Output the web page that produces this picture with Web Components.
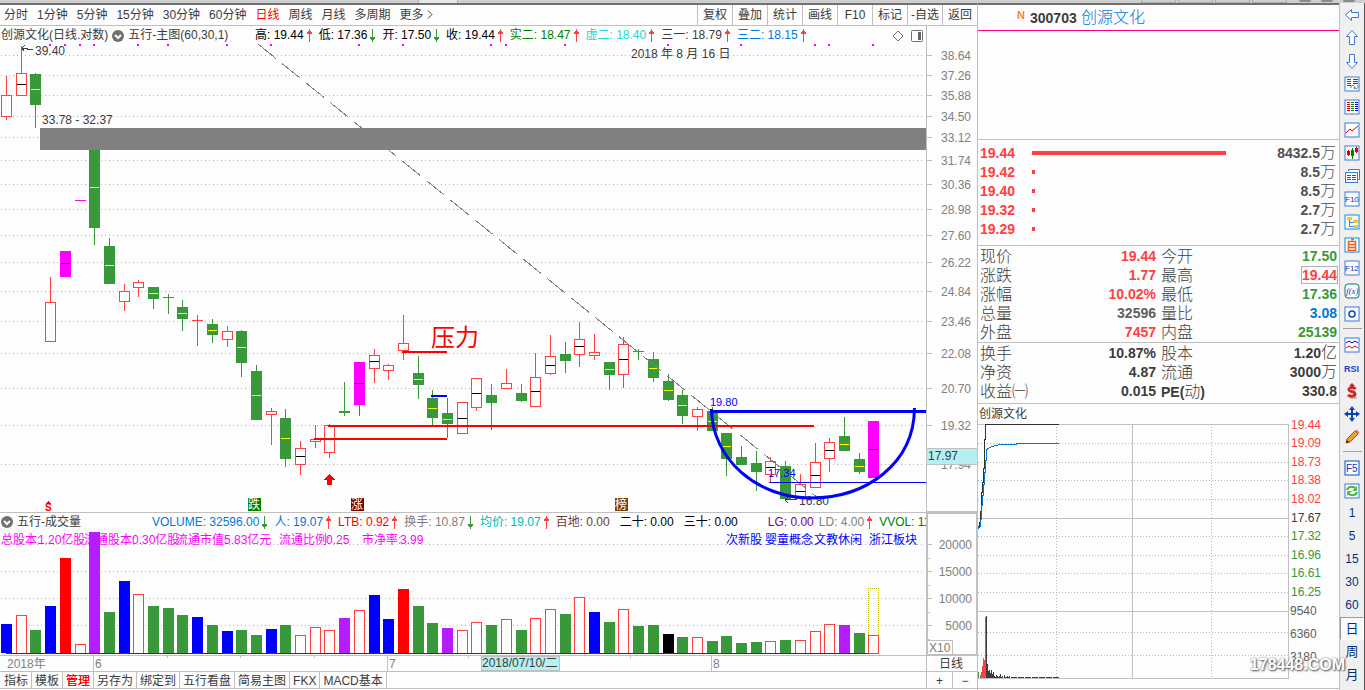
<!DOCTYPE html>
<html lang="zh-CN">
<head>
<meta charset="utf-8">
<title>创源文化 300703</title>
<style>
html,body{margin:0;padding:0}
body{background:#fdfdfd;color:#3c3c3c;font-family:"Liberation Sans","Noto Sans CJK SC",sans-serif;font-size:12px;line-height:16px;overflow:hidden}
</style>
</head>
<body>
<trade-app></trade-app>
<script>
const LINE = '#c0c0c0', RED = '#ff4040', GREEN = '#399839', MAG = '#ff00ff';
const BTN = 'button{all:unset;box-sizing:border-box;cursor:pointer}';
const SVGCSS = ':host{display:block}svg{display:block;width:100%;height:auto;overflow:visible}text{font-family:"Liberation Sans","Noto Sans CJK SC",sans-serif;font-size:12px;white-space:pre}';
const rect = (x, y, w, h, f, extra = '') => `<rect x="${x}" y="${y}" width="${w}" height="${h}" fill="${f}" ${extra}/>`;
const box = (x, y, w, h, s, f = '#fdfdfd') => `<rect x="${x + .5}" y="${y + .5}" width="${w - 1}" height="${h - 1}" fill="${f}" stroke="${s}"/>`;
const hl = (x1, x2, y, c, extra = '') => `<path d="M${x1} ${y + .5}H${x2}" stroke="${c}" fill="none" ${extra}/>`;
const vl = (x, y1, y2, c, extra = '') => `<path d="M${x + .5} ${y1}V${y2}" stroke="${c}" fill="none" ${extra}/>`;
const txt = (x, y, s, c = '#3c3c3c', extra = '') => `<text x="${x}" y="${y}" fill="${c}" ${extra}>${s}</text>`;
const slot = i => Math.round(6 + 14.7 * i);
const define = (name, render) => customElements.define(name, class extends HTMLElement {
  connectedCallback() {
    if (this.shadowRoot) return;
    this.attachShadow({mode: 'open'}).innerHTML = render(this);
  }
});

/* colour, high, body top, body bottom, low, middle mark */
const CANDLES = [
['r',76,95,116,119],['r',46,73,95,95,84],['g',73,74,104,127,89],['r',277,302,341,341],['m',251,251,276,276,263],['m',200,200,200,200],
['g',150,150,227,244,187],['g',238,246,283,283,265],['r',284,291,301,310],['r',280,282,287,296],['g',287,287,298,308,293],['g',294,297,297,313],
['g',300,307,318,330,313],['r',315,320,320,345],['g',319,324,334,342,330],['r',326,331,339,346],['g',330,331,362,376,347],['g',365,371,419,419,395],
['r',408,411,414,444],['g',409,418,458,466,438],['r',441,448,464,474,456],['r',425,439,441,447],['r',424,425,452,457],['g',382,411,412,415],
['m',362,362,404,415,383],['r',349,355,368,382,361],['r',364,365,370,379],['r',315,343,350,359],['g',356,373,384,398,379],['g',390,398,417,424,408],
['g',398,413,423,437,419],['r',402,402,433,433,418],['r',378,378,407,410,393],['g',384,395,402,429],['r',369,383,388,388],['g',384,393,400,401],
['r',353,377,406,406,391],['r',335,356,373,374,365],['g',342,354,360,372],['r',322,339,354,366,346],['r',334,352,355,359],['g',362,362,374,389,369],
['r',337,344,374,387,359],['g',349,351,351,359],['g',352,359,377,381,368],['g',374,381,399,400,390],['g',390,395,415,423,405],['r',407,409,416,430],
['g',407,411,430,430,421],['g',433,433,458,475,446],['g',446,457,464,464],['g',451,463,471,490],['r',457,461,474,482,467],['g',461,466,498,498],
['r',474,484,498,498,491],['r',443,462,487,487,475],['r',438,442,458,471,450],['g',417,436,450,450,444],['g',453,459,471,473,466],['m',421,421,477,477,449]];
/* fill, bar top */
const VOLUMES = 'b624 h615 g630 b606 r558 h644 p532 g612 b581 h594 g606 g608 g615 b617 g625 b631 g630 g635 b629 g625 h635 h627 h630 p618 h610 b595 b619 r589 g606 g623 p628 h630 h622 g625 h619 g630 h618 h609 g614 h597 b612 g622 h609 g626 g625 k634 g637 h637 g641 g636 g643 g642 h641 g640 h640 h631 h624 p625 g633 h635'.split(' ');

define('window-strip', () => `<style>
:host{display:flex;height:3px;background:#cfcfcf;overflow:hidden}
.gap{width:418px}.hi{width:38px;background:#e6e6e6;border:solid #aaa;border-width:0 1px}.mid{flex:1}
.t{width:33px;margin-right:2px;border:1px solid #aaa;border-top:0;height:2px;box-sizing:content-box}.o{width:12px;height:2px;background:#8a8a8a;margin-left:10px;border-radius:0 0 6px 6px}.end{width:10px}
</style><span class="gap"></span><span class="hi"></span><span class="mid"></span><span class="t"></span><span class="t"></span><span class="t"></span><span class="t"></span><span class="o"></span><span class="o"></span><span class="o"></span><span class="end"></span>`);

define('period-toolbar', () => `<style>${BTN}
:host{display:flex;height:20px;border-bottom:1px solid ${LINE};line-height:20px}
nav{display:flex;gap:9px;padding-left:4px;flex:1}
.on{color:#f00}
.acts{display:flex}.acts button{width:35px;border-left:1px solid ${LINE};text-align:center}
</style><nav>${'分时,1分钟,5分钟,15分钟,30分钟,60分钟,日线,周线,月线,多周期'.split(',').map(t => `<button${t === '日线' ? ' class="on"' : ''}>${t}</button>`).join('')}<button>更多 <svg width="6" height="9"><path d="M1 0.5L5 4.5L1 8.5" fill="none" stroke="#3c3c3c"/></svg></button></nav>
<div class="acts">${'复权,叠加,统计,画线,F10,标记,-自选,返回'.split(',').map(t => `<button>${t}</button>`).join('')}</div>`);

define('legend-item', el => {
  const d = el.getAttribute('dir-mark');
  const a = d === 'up' ? `<svg width="5" height="13" shape-rendering="crispEdges" fill="${RED}"><path d="M2 0h1v13h-1zM1 2h3v1h-3zM0 3h5v2h-5z"/></svg>`
    : d === 'down' ? `<svg width="5" height="13" shape-rendering="crispEdges" fill="${GREEN}"><path d="M2 0h1v13h-1zM1 10h3v1h-3zM0 8h5v2h-5z"/></svg>` : '';
  return `<style>:host{display:flex;align-items:center;white-space:pre;margin-right:${d ? 7 : 10}px}svg{margin-left:3px}</style><slot></slot>${a}`;
});

const CHEV = '<svg class="chev" width="12" height="12"><circle cx="6" cy="6" r="6" fill="#707070"/><path d="M3 5L6 8L9 5" fill="none" stroke="#fff" stroke-width="2"/></svg>';
const items = a => a.map(([t, c, d]) => `<legend-item style="color:${c}" ${d ? `dir-mark="${d}"` : ''}>${t}</legend-item>`).join('');

define('price-legend', () => `<style>
:host{display:flex;height:18px;line-height:17px;white-space:nowrap}
.l{flex:1;display:flex;align-items:center;min-width:0;overflow:hidden;padding:1px 0 0 1px}
.name{display:flex;align-items:center;gap:4px;width:254px}.r{width:50px;border-left:1px solid ${LINE}}
.tools{margin-left:auto;display:flex;gap:7px;padding-right:3px}
</style><div class="l"><span class="name">创源文化(日线.对数)${CHEV}五行-主图(60,30,1)</span>${items([
['高: 19.44','#000','up'],['低: 17.36','#000','down'],['开: 17.50','#000','down'],['收: 19.44','#000','up'],['实二: 18.47','#008000','up'],['虚二: 18.40','#20d8d8','up'],['三一: 18.79','#3c3c3c','up'],['三二: 18.15','#0078d7','up']])}
<span class="tools"><svg width="12" height="12"><path d="M6 1L11 6L6 11L1 6z" fill="none" stroke="#707070"/></svg><svg width="12" height="12"><rect x=".5" y=".5" width="11" height="11" rx="1" fill="none" stroke="#707070"/><rect x="7" y="2" width="3" height="8" fill="#666"/></svg></span></div><div class="r"></div>`);

define('volume-legend', () => `<style>
:host{display:flex;height:17px;line-height:16px;white-space:nowrap;border-top:1px solid ${LINE}}
.l{flex:1;display:flex;align-items:center;min-width:0;overflow:hidden;padding:1px 0 0 1px}
.name{display:flex;align-items:center;gap:4px;width:151px;flex:none}.sp{width:20px;flex:none}.r{flex:none;box-sizing:border-box;border:2px solid ${LINE};border-width:1px 1px 0 2px;width:51px}
legend-item{flex:none}
</style><div class="l"><span class="name">${CHEV}五行-成交量</span>${items([
['VOLUME: 32596.00','#0078d7','down'],['人: 19.07','#0078d7','up'],['LTB: 0.92','#f00','up'],['换手: 10.87','#808080','down'],['均价: 19.07','#00b8b8','up'],['百地: 0.00','#6b3a3a'],['二十: 0.00','#000'],['三十: 0.00','#000']])}<span class="sp"></span>${items([['LG: 0.00','#800080;margin-right:5px'],['LD: 4.00','#808080','up'],['VVOL: 11','#008000']])}</div><div class="r"></div>`);

define('price-chart', () => {
  const ys = [55,75,95,116,137,160,184,209,235,262,291,321,353,388,425,464];
  const lab = '38.64 37.26 35.88 34.50 33.12 31.74 30.36 28.98 27.60 26.22 24.84 23.46 22.08 20.70 19.32 17.94'.split(' ');
  let s = ys.map((y, i) => hl(1, 925, y, '#b8b8b8', 'stroke-dasharray="1 3"') + hl(927, 932, y, LINE) + txt(941, y + 5, lab[i], '#808080')).join('');
  s += vl(926, 44, 512, LINE) + hl(926, 977, 511, LINE);
  CANDLES.forEach(([c, h, t, b, l, m], i) => {
    const x = slot(i), col = c === 'r' ? RED : c === 'g' ? GREEN : MAG;
    if (l > h) s += vl(x, h, l + 1, col);
    if (c === 'r' && b > t) s += box(x - 5, t, 11, b - t + 1, col);
    else s += rect(x - 5, t, 11, b - t + 1, col);
    if (m) s += rect(x - 4, m, 9, 1, c === 'g' ? '#ff0' : '#000');
  });
  [3,4,5,6,9,11,15,18,24,27,33,34,38,45,50,55,56,59].forEach(i => s += rect(slot(i) - 1, 44, 2, 2, MAG));
  s += '<path d="M258 44L818 498" stroke="#808080" stroke-dasharray="23 8" fill="none"/>';
  s += rect(40, 128, 886, 22, '#808080');
  s += rect(328, 425, 486, 2, '#f00') + rect(314, 438, 133, 2, '#f00') + rect(402, 351, 45, 2, '#f00') + rect(431, 395, 16, 2, '#00f');
  s += rect(710, 410, 216, 3, '#00f') + rect(769, 482, 157, 1, '#00f');
  s += txt(35, 55, '39.40') + txt(42, 124, '33.78 - 32.37') + txt(631, 58, '2018 年 8 月 16 日');
  s += '<path d="M22 48L33 50M22 48L25 45M22 48L24 51" stroke="#3c3c3c" fill="none"/>';
  s += txt(710, 406, '19.80', '#00f', 'style="font-size:11px"') + txt(768, 477, '17.34', '#00f', 'style="font-size:11px"');
  s += txt(799, 505, '16.80') + '<path d="M785 499.500H797M785 499.500L788 497M785 499.500L788 503" stroke="#3c3c3c" fill="none"/>';
  s += '<path shape-rendering="auto" d="M711.500 409C712 460 758 498 811 498C866 498 914 464 914.500 408" stroke="#00f" stroke-width="3" fill="none"/>';
  s += txt(431, 346, '压力', '#f00', 'style="font-size:24px"');
  s += '<path d="M329.500 474L335 480H332V485H327V480H324z" fill="#f00"/>';
  [[248,'跌','#008000'],[351,'涨','#800000'],[615,'榜','#804000']].forEach(([x, t, c]) => s += rect(x, 498, 13, 13, c) + txt(x, 509, t, '#fff'));
  s += txt(45, 511, 'S', '#f00', 'style="font-size:10px;font-weight:700"') + '<path d="M46 504L48.500 501L51 504z" fill="#f00"/>';
  s += rect(927, 449, 50, 15, '#b4f0f0') + hl(927, 977, 448, LINE) + hl(927, 977, 464, LINE) + txt(928, 460, '17.97');
  return `<style>${SVGCSS}</style><svg viewBox="0 44 977 468" shape-rendering="crispEdges">${s}</svg>`;
});

define('volume-chart', () => {
  let s = [544,571,598,625].map((y, i) => hl(1, 925, y, '#b8b8b8', 'stroke-dasharray="1 3"') + hl(928, 932, y, LINE) + hl(928, 930, y + 14, LINE) + txt(972, y + 5, ['20000','15000','10000','5000'][i], '#808080', 'text-anchor="end"')).join('');
  [[1,'总股本:'],[38,'1.20亿股'],[84,'流通股本:'],[132,'0.30亿股'],[176,'流通市值:'],[224,'5.83亿元'],[279,'流通比例:'],[326,'0.25'],[362,'市净率:'],[400,'3.99']].forEach(([x, t]) => s += txt(x, 544, t, MAG));
  [[726,'次新股'],[765,'婴童概念'],[814,'文教休闲'],[869,'浙江板块']].forEach(([x, t]) => s += txt(x, 544, t, '#00f'));
  const fill = {b: '#00f', g: GREEN, r: '#f00', p: '#b41eff', k: '#000'};
  VOLUMES.forEach((v, i) => {
    const y = +v.slice(1), x = slot(i) - 5;
    s += v[0] === 'h' ? box(x, y, 11, 654 - y + (i === 59 ? 0 : 2), RED) : rect(x, y, 11, 653 - y, fill[v[0]]);
  });
  s += hl(6, 868, 653, '#800080') + rect(0, 654, 926, 1, '#fdfdfd');
  s += '<path d="M868.500 635V588.500H878.500V635" fill="none" stroke="#c0b800" stroke-dasharray="1 1"/>';
  s += rect(926, 530, 2, 126, LINE) + rect(976, 530, 1, 126, LINE) + rect(926, 654, 51, 2, LINE);
  s += box(927, 640, 26, 15, LINE) + txt(929, 652, 'X10', '#808080');
  s += hl(0, 977, 655, LINE) + hl(0, 977, 671, LINE) + vl(926, 655, 672, LINE);
  [93,387,711].forEach((x, i) => s += vl(x, 655, 671, LINE) + txt(x + 2, 668, 6 + i, '#808080'));
  [167,240,314,468,630].forEach(x => s += vl(x, 656, 658, LINE));
  s += txt(7, 668, '2018年', '#808080') + box(481, 656, 79, 15, LINE, '#b4f0f0') + txt(482, 667, '2018/07/10/二') + txt(939, 668, '日线');
  return `<style>${SVGCSS}</style><svg viewBox="0 530 977 142" shape-rendering="crispEdges">${s}</svg>`;
});

define('template-tabs', () => `<style>${BTN}
:host{display:flex;height:16px;line-height:18px;border-bottom:1px solid ${LINE}}
nav{display:flex;flex:1;padding-left:1px}nav button{height:16px;padding:0 3px;border-right:1px solid ${LINE}}.on{color:#f00;text-shadow:0 0 0 #f00}
.z{display:flex}.z button{width:25px;height:16px;border-left:1px solid ${LINE};text-align:center}.z button:first-child{width:26px}
</style><nav>${'指标,模板,管理,另存为,绑定到,五行看盘,简易主图,FKX,MACD基本'.split(',').map(t => `<button${t === '管理' ? ' class="on"' : ''}>${t}</button>`).join('')}</nav><div class="z"><button>+</button><button>−</button></div>`);

define('order-book', () => `<style>
:host{display:block;padding:3px 3px 7px 2px;border-bottom:1px solid ${LINE}}
div{display:grid;grid-template-columns:52px 194px 1fr;align-items:center;height:19px;font-size:14px;font-weight:700;color:${RED}}
i{display:block;height:4px;background:${RED}}b{color:#505050;text-align:right}span{font-size:16px;font-weight:300}
</style>${[['19.44','8432.5',194],['19.42','8.5',3],['19.40','8.5',3],['19.32','2.7',3],['19.29','2.7',3]].map(([p, v, w]) => `<div>${p}<i style="width:${w}px"></i><b>${v}<span>万</span></b></div>`).join('')}`);

define('quote-table', () => {
  const r = RED, g = GREEN, k = '#3c3c3c';
  const part = rows => `<table>${rows.map(a => `<tr><th>${a[0]}</th><td style="color:${a[2]}">${a[1]}</td><th>${a[3]}</th><td style="color:${a[5]}"${a[6] ? ' class="hi"' : ''}><span>${a[4]}</span></td></tr>`).join('')}</table>`;
  return `<style>
:host{display:block}table{width:100%;border-collapse:collapse;table-layout:fixed}
section{border-bottom:1px solid ${LINE};padding-top:1px}section+section{padding-bottom:2px}
tr{height:19px}th,td{padding:0;line-height:19px;height:19px}
th{width:57px;text-align:left;font-size:16px;font-weight:300;padding-left:2px;white-space:nowrap}th+td+th{padding-left:5px}
td{font-size:14px;font-weight:700;text-align:right;padding-right:2px}td em{font-style:normal;font-weight:300;font-size:16px;line-height:0}td:nth-child(2){width:119px;padding:0}
th b{font-size:14px;font-weight:700;line-height:0}.hi span{outline:1px solid #b0b0b0}
</style><section>${part([['现价','19.44',r,'今开','17.50',g],['涨跌','1.77',r,'最高','19.44',r,1],['涨幅','10.02%',r,'最低','17.36',g],['总量','32596','#606060','量比','3.08','#0078d7'],['外盘','7457',r,'内盘','25139',g]])}</section>
<section>${part([['换手','10.87%',k,'股本','1.20<em>亿</em>',k],['净资','4.87',k,'流通','3000<em>万</em>',k],['收益㈠','0.015',k,'<b>PE(</b>动<b>)</b>','330.8',k]])}</section>`;
});

define('minute-chart', () => {
  const D = 'stroke-dasharray="1 2"';
  let s = [443,462,480,499,536,555,573,592,632,655].map(y => hl(978, 1288, y, '#b8b8b8', D)).join('');
  s += [424,518,611,678].map(y => hl(978, 1289, y, LINE)).join('') + vl(1132, 424, 679, LINE) + vl(1288, 424, 679, LINE) + vl(1056, 424, 679, '#b8b8b8', D) + vl(1211, 424, 679, '#b8b8b8', D);
  [[429,'19.44',RED],[447,'19.09',RED],[466,'18.73',RED],[484,'18.38',RED],[503,'18.02',RED],[522,'17.67','#3c3c3c'],[540,'17.32',GREEN],[559,'16.96',GREEN],[577,'16.61',GREEN],[596,'16.25',GREEN],[615,'9540','#606060'],[638,'6360','#606060'],[661,'3180','#606060']].forEach(([y, t, c], i) => s += txt(i < 10 ? 1291 : 1290, y, t, c));
  s += '<path d="M978 526.500H979.500V522.500H980.500V511H981.500V492H982.500V482H983.500V468H984.500V439.500H985.500V424.500H1059" fill="none" stroke="#303030"/>';
  s += '<path d="M978 528.500L980.500 526.500V519.500H981.500V505H982.500V495H983.500V484H984.500V472H985.500V460H986.500V450L988 448.500L992.500 446.500L1000 444.500H1016.500V443.500H1059" fill="none" stroke="#0078d7"/>';
  [[978,672,GREEN],[980,675,RED],[981,672,RED],[982,666,RED],[983,658,RED],[984,660,RED],[985,617,RED],[986,616,'#3c3c3c'],[987,664],[988,671],[989,670],[990,673],[991,670],[992,674],[993,672],[994,676],[996,675],[997,676],[999,676],[1000,674],[1002,676],[1004,675],[1007,676],[1009,676]].forEach(([x, y, c]) => s += rect(x, y, 1, 678 - y, c || '#3c3c3c'));
  s += hl(990, 1060, 677, '#3c3c3c', 'stroke-dasharray="6 1"');
  return `<style>${SVGCSS}h2{margin:0;font-size:12px;font-weight:400;line-height:20px;padding-left:1px}:host{border-bottom:1px solid ${LINE}}</style><h2>创源文化</h2><svg viewBox="978 424 361 264" shape-rendering="crispEdges">${s}</svg>`;
});

define('quote-panel', () => `<style>
:host{display:block}
header{display:flex;height:25px;align-items:center;padding-left:39px;border-bottom:1px solid #ff0080}
sup{font:700 11px/12px "Liberation Sans",sans-serif;color:#ff8040;width:13px;align-self:flex-start;padding-top:4px}
b{font-size:14px;width:51px}h1{margin:0;font-size:16px;font-weight:300;color:#0078d7;line-height:24px}
.blank{height:108px;border-bottom:1px solid ${LINE}}
</style><header><sup>N</sup><b>300703</b><h1>创源文化</h1></header><div class="blank"></div><order-book></order-book><quote-table></quote-table><minute-chart></minute-chart>`);

define('tool-rail', () => {
  const B = (c, inner) => `<rect x="1" y="1" width="14" height="14" fill="#fdfdfd" stroke="${c}"/>${inner}`;
  const T = (t, x, n) => `<text x="${x}" y="${n > 8 ? 12 : 11}" fill="#2030c0" style="font:${n}px 'Liberation Sans',sans-serif">${t}</text>`;
  const rows = (x, w, c, ys) => ys.map(y => `<path d="M${x} ${y}.5h${w}" stroke="${c}"/>`).join('');
  const A = '#3c78d8';
  const ic = [
    ['后退', `<path d="M1.500 8L7.500 2.500V5.500H14.500V10.500H7.500V13.500z" fill="#fff" stroke="${A}"/>`],
    ['上移', `<path d="M8 .5L13.500 6.500H10.500V14.500H5.500V6.500H2.500z" fill="#fff" stroke="${A}"/>`],
    ['下移', `<path d="M8 15.500L13.500 9.500H10.500V1.500H5.500V9.500H2.500z" fill="#fff" stroke="${A}"/>`],
    ['报价', B(A, rows(3, 4, '#008000', [3,5,7,9]) + rows(9, 5, '#e00000', [3,5,7]) + '<path d="M7 12a2 2 0 1 1 3 1M10 11a2 2 0 1 0 3-2" fill="none" stroke="#777"/>')],
    ['列表', B(A, rows(3, 3, '#e00000', [3,5,7,9,11]) + rows(7, 3, '#008000', [3,5,7,9,11]) + rows(11, 3, '#0000d0', [3,5,7,9,11]))],
    ['走势', B(A, '<path d="M2 11L6 7L8 9L14 4" fill="none" stroke="#e00000"/>')],
    ['K线', B(A, '<path d="M4.500 5V11M12.500 2V8" stroke="#e00000"/><path d="M8.500 3V14" stroke="#008000"/><path d="M3 6h3v4H3zM11 3h3v4h-3z" fill="#e00000"/><path d="M7 5h3v6H7z" fill="#008000"/>')],
    ['资讯', `<path d="M4.500 3V1.500H15.500V11.500H13" fill="#fff" stroke="${A}"/><rect x="1.500" y="4.500" width="12" height="10" fill="#fff" stroke="${A}"/>` + rows(3, 4, '#555', [7,9,11]) + rows(8, 4, '#555', [7,9,11])],
    ['F10', B(A, T('F10', 1, 8))],
    ['结构', B('#0090e0', '<path d="M5.500 5V12.500H9M5.500 8.500H9" fill="none" stroke="#3c78d8"/><path d="M3 3h5v3H3zM9 6h5v3H9zM9 11h5v3H9z" fill="#ffc020"/>')],
    ['自选', B('#0090e0', '<path d="M5 4.500H11.500V13.500H4.500V4.500H6M5 7.500H11M5 10.500H11M7 2.500H10" fill="none" stroke="#f06020" stroke-width="1.500"/>')],
    ['F12', B(A, T('F12', 1, 8))],
    ['公式', `<rect x="1" y="1" width="14" height="14" rx="3" fill="#fff" stroke="#107878"/><text x="2" y="11" fill="#2030c0" style="font:italic 9px 'Liberation Serif',serif">f(x)</text>`],
    ['圆', B(A, '<circle cx="8" cy="8" r="3" fill="none" stroke="#0050b0" stroke-width="1.500"/>')], 0,
    ['对比', B(A, '<path d="M2 6L5 4L8 6L11 4L14 6" fill="none" stroke="#0000d0"/><path d="M2 11L5 9L8 11L11 9L14 11" fill="none" stroke="#e00000"/>')],
    ['RSI', `<text x="0" y="12" fill="#2838d8" style="font:700 9px 'Liberation Sans',sans-serif">RSI</text>`],
    ['交易', `<path d="M8 0L11 3H9.500V4H6.500V3H5z" fill="#d02020"/><path d="M11.500 6C9 3.500 4.500 4.500 5 7C5.500 9 11 8 11 11C11 13.500 6 14 4 12" fill="none" stroke="#c82828" stroke-width="3"/><path d="M6 15H13" stroke="#888"/>`],
    ['移动', '<path d="M8 0L11 4H5zM8 16L11 12H5zM0 8L4 5V11zM16 8L12 5V11z" fill="#0840b8"/><path d="M8 4V12M4 8H12" stroke="#0840b8" stroke-width="2"/>'],
    ['画笔', '<path d="M2 14L3 10L11 2L14 5L6 13z" fill="#f0a030" stroke="#8a5020"/><path d="M11 2L12.500.5L15.500 3.500L14 5z" fill="#e87070"/><path d="M2 14L3 11L5 13z" fill="#333"/>'], 0,
    ['F5', B('#0050d0', T('F5', 2, 10))],
    ['刷新', B(A, '<path d="M3 7C4 3 10 3 12 6M13 9C12 13 6 13 4 10" fill="none" stroke="#40b040" stroke-width="2"/><path d="M13 3V8H8zM3 13V8H8z" fill="#50c040"/>')]];
  return `<style>${BTN}
:host{display:flex;flex-direction:column;background:#f0f0f0;border-left:1px solid ${LINE};border-right:1px solid #555;color:#003080;font-family:"Liberation Sans","Noto Sans CJK SC",sans-serif}
button{height:23px;display:flex;align-items:center;justify-content:center;line-height:23px}hr{width:19px;height:1px;margin:3px auto 4px;border:0;background:#a0a0a0}
.c{font-size:13px}.on{background:#fafafa;border:1px solid #fff;border-top-color:#999;border-left-color:#999}
</style>${ic.map(a => a ? `<button aria-label="${a[0]}"><svg width="16" height="16">${a[1]}</svg></button>` : '<hr>').join('')}${['1','5','15','30','60','日','周','月'].map(t => `<button class="${/\d/.test(t) ? '' : 'c'}${t === '日' ? ' on' : ''}">${t}</button>`).join('')}`;
});

define('trade-app', () => `<style>
:host{display:block;position:relative}
main{display:grid;grid-template-columns:minmax(0,1fr) 361px 26px;min-height:calc(100vh - 3px)}
.left,quote-panel{border-top:2px solid #707070}.left{border-right:1px solid ${LINE}}
.wm{position:absolute;right:20px;bottom:14px;font:700 16px/22px "Liberation Sans",sans-serif;color:#fff;text-shadow:1px 1px 2px #555,0 0 2px #777;pointer-events:none}
</style><window-strip></window-strip><main><div class="left"><period-toolbar></period-toolbar><price-legend></price-legend><price-chart></price-chart><volume-legend></volume-legend><volume-chart></volume-chart><template-tabs></template-tabs></div><quote-panel></quote-panel><tool-rail></tool-rail></main><div class="wm">178448.COM</div>`);
</script>
</body>
</html>
